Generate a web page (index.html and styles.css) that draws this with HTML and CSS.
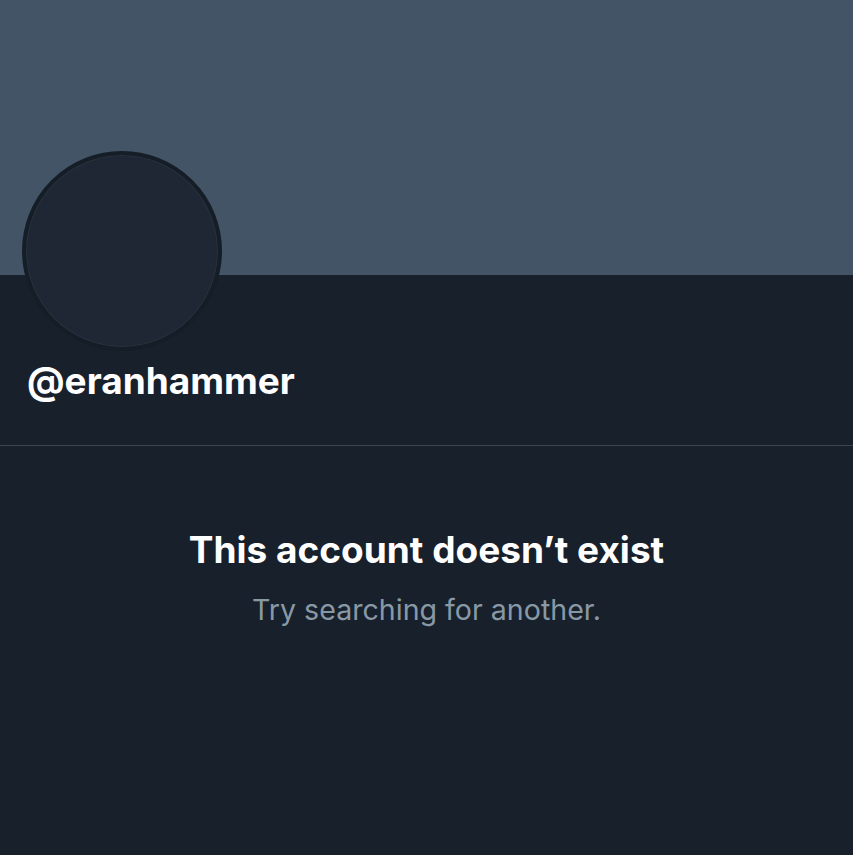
FILE: index.html
```html
<!DOCTYPE html>
<html lang="en">
<head>
  <meta charset="UTF-8">
  <title>@eranhammer</title>
  <link rel="stylesheet" href="styles.css">
</head>
<body>

  <div class="profile">
    <div class="banner"></div>
    <div class="avatar"></div>
    <h1 class="handle">@eranhammer</h1>
  </div>

  <div class="empty">
    <h2>This account doesn’t exist</h2>
    <p>Try searching for another.</p>
  </div>

</body>
</html>
```

FILE: styles.css
```css
body {
  margin: 0;
  font-family: Inter, 'Noto Sans', 'Liberation Sans', sans-serif;
  background: #18202b;
  color: #fff;
}
.profile {
  border-bottom: 1px solid #3a4550;
  height: 445px;
}
.banner {
  height: 275px;
  background: #435466;
}
.avatar {
  width: 192px;
  height: 192px;
  margin: -124px 0 0 22px;
  border: 4px solid #151d27;
  border-radius: 50%;
  background: #1e2733;
  box-shadow: inset 0 0 0 1px #29333f;
}
.handle {
  margin: 8px 0 0 27px;
  font-size: 37px;
  line-height: 44px;
  font-weight: 700;
}
.empty {
  text-align: center;
  padding-top: 82px;
}
.empty h2 {
  margin: 0;
  font-size: 37px;
  line-height: 44px;
  font-weight: 700;
}
.empty p {
  margin: 20px 0 0;
  font-size: 28.6px;
  line-height: 36px;
  color: #8899a6;
}
```
